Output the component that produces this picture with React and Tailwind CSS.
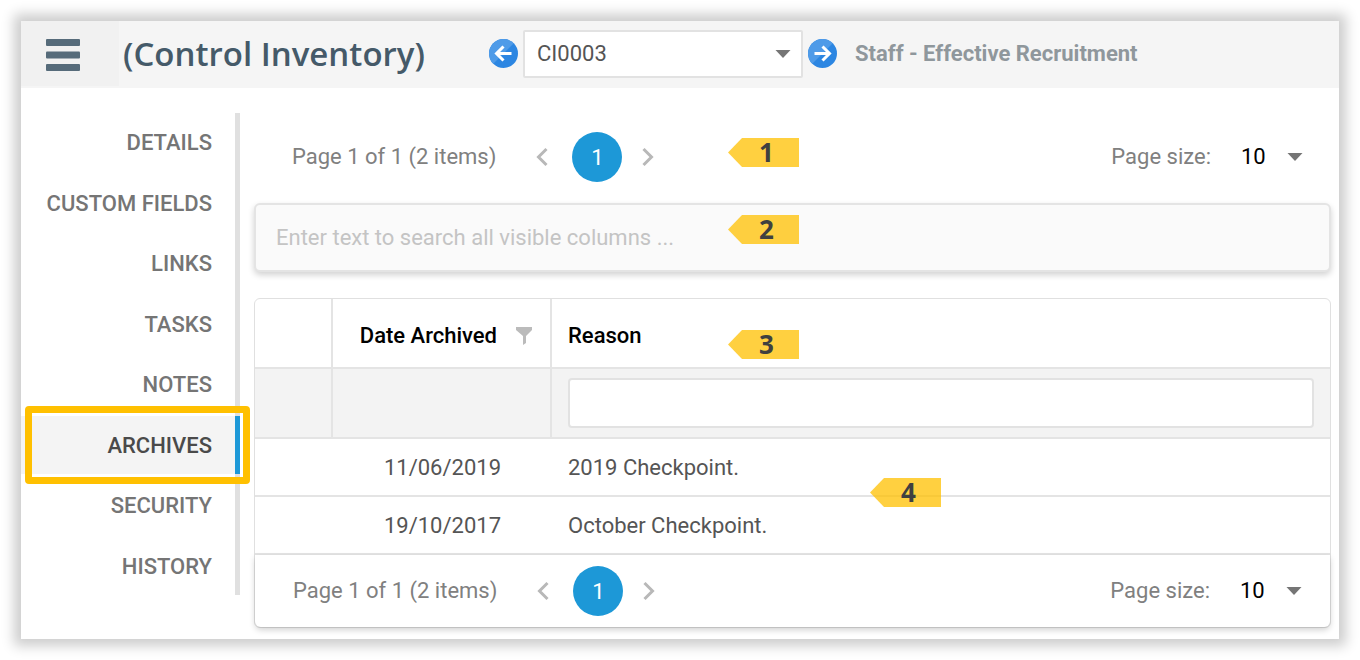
import React, { useState } from "react";

const tabs = [
  "Details",
  "Custom Fields",
  "Links",
  "Tasks",
  "Notes",
  "Archives",
  "Security",
  "History",
];

const archives = [
  { date: "11/06/2019", reason: "2019 Checkpoint." },
  { date: "19/10/2017", reason: "October Checkpoint." },
];

const Caret = () => (
  <svg
    className="pointer-events-none absolute right-3 top-1/2 h-2 w-4 -translate-y-1/2"
    viewBox="0 0 16 8"
    aria-hidden="true"
  >
    <path d="M0.5 0h15L8 8z" fill="#757575" />
  </svg>
);

const Chevron = ({ flip }) => (
  <svg
    className={flip ? "h-5 w-3 rotate-180" : "h-5 w-3"}
    viewBox="0 0 12 20"
    fill="none"
    stroke="#b8b8b8"
    strokeWidth="3"
    aria-hidden="true"
  >
    <path d="M10.5 2L2.5 10l8 8" />
  </svg>
);

const RoundArrow = ({ id, flip }) => (
  <svg className="h-[29px] w-[29px]" viewBox="0 0 29 29" aria-hidden="true">
    <clipPath id={id}>
      <circle cx="14.5" cy="14.5" r="14.5" />
    </clipPath>
    <g clipPath={`url(#${id})`}>
      <path d="M0 0h29v29H0z" fill="#2c86e2" />
      <path d="M0 0h29L0 29z" fill="#4f9be8" />
    </g>
    <g transform={flip ? "rotate(180 14.5 14.5)" : undefined}>
      <path
        d="M22.5 14.5H8M14.5 7.5l-7 7 7 7"
        fill="none"
        stroke="#fff"
        strokeWidth="3"
      />
    </g>
  </svg>
);

const Marker = ({ number, className }) => (
  <div
    className={`absolute flex h-[29px] w-[71px] items-center justify-center bg-[#ffc000]/75 pb-0.5 pl-1.5 font-['Noto_Sans'] text-[26px] font-bold leading-7 text-[#404040] [clip-path:polygon(14px_0,100%_0,100%_100%,14px_100%,0_50%)] ${className}`}
  >
    {number}
  </div>
);

const Pager = ({ id }) => {
  const [size, setSize] = useState("10");

  return (
    <div className="flex h-[72px] items-center justify-between pl-[38px] pr-4 text-[#808080]">
      <div className="flex items-center">
        <span>Page 1 of 1 (2 items)</span>
        <button className="ml-10" aria-label="Previous page">
          <Chevron />
        </button>
        <button className="ml-6 h-[50px] w-[50px] rounded-full bg-[#1d98d7] pt-0.5 text-white">
          1
        </button>
        <button className="ml-5" aria-label="Next page">
          <Chevron flip />
        </button>
      </div>
      <div className="flex items-center">
        <label htmlFor={id}>Page size:</label>
        <div className="relative ml-[30px]">
          <select
            id={id}
            value={size}
            onChange={(e) => setSize(e.target.value)}
            className="w-[74px] appearance-none bg-transparent text-black"
          >
            <option>10</option>
            <option>20</option>
            <option>50</option>
          </select>
          <Caret />
        </div>
      </div>
    </div>
  );
};

const App = () => {
  const [active, setActive] = useState("Archives");

  return (
    <div className="bg-white p-[21px] font-['Roboto',sans-serif] text-[22px] leading-7">
      <div className="bg-white shadow-[0_0_12px_7px_rgba(0,0,0,0.2)]">
        <header className="flex h-[67px] items-center bg-[#f5f5f5] pb-0.5">
          <button
            className="flex h-full w-[98px] shrink-0 items-center bg-[#f1f1f1] pl-[25px] pt-0.5"
            aria-label="Menu"
          >
            <svg className="h-8 w-[34px]" viewBox="0 0 34 32" fill="#566b7a">
              <rect width="34" height="7" rx="1" />
              <rect y="12.5" width="34" height="7" rx="1" />
              <rect y="25" width="34" height="7" rx="1" />
            </svg>
          </button>
          <h1 className="w-[370px] shrink-0 pl-1 font-['Open_Sans'] text-[33px] font-semibold leading-10 text-[#455a69]">
            (Control Inventory)
          </h1>
          <button aria-label="Previous control">
            <RoundArrow id="prev-disc" />
          </button>
          <div className="relative mx-[5px]">
            <select
              aria-label="Control"
              className="h-12 w-[280px] appearance-none rounded-xs border-2 border-[#e2e2e2] bg-white pl-3 text-[#555]"
            >
              <option>CI0003</option>
            </select>
            <Caret />
          </div>
          <button aria-label="Next control">
            <RoundArrow id="next-disc" flip />
          </button>
          <span className="ml-[18px] font-bold text-[#8f979c]">
            Staff - Effective Recruitment
          </span>
        </header>

        <div className="flex pb-[11px] pr-2 pt-[25px]">
          <nav className="w-[219px] shrink-0">
            <ul className="flex h-[482px] flex-col justify-between border-r-[5px] border-[#e0e0e0] text-right font-medium uppercase text-[#757575]">
              {tabs.map((tab) => (
                <li
                  key={tab}
                  className={
                    tab === active
                      ? "relative -mr-[5px] border-r-[5px] border-[#1d98d7] bg-[#f4f4f4] text-[#4a4a4a]"
                      : ""
                  }
                >
                  <a
                    href={`#${tab}`}
                    onClick={() => setActive(tab)}
                    className="block pb-3.5 pr-[23px] pt-4"
                  >
                    {tab}
                  </a>
                  {tab === active && (
                    <div className="pointer-events-none absolute -bottom-2.5 -right-[15px] -top-2.5 left-1 rounded-sm border-[7px] border-[#ffc000]" />
                  )}
                </li>
              ))}
            </ul>
          </nav>

          <main className="relative ml-3.5 grow">
            <div className="pb-2.5 pt-2">
              <Pager id="page-size-top" />
            </div>

            <input
              type="search"
              aria-label="Search"
              placeholder="Enter text to search all visible columns ..."
              className="block h-[69px] w-full rounded-md border-2 border-[#e4e4e4] bg-[#fafafa] px-5 shadow-[0_3px_6px_rgba(0,0,0,0.18)] placeholder:text-[#c4c4c4]"
            />

            <div className="mt-[26px] rounded-md border border-[#e0e0e0]">
              <table className="w-full table-fixed border-collapse">
                <colgroup>
                  <col className="w-[77px]" />
                  <col className="w-[219px]" />
                  <col />
                </colgroup>
                <thead>
                  <tr className="h-[69px] border-b-2 border-[#e4e4e4] font-medium text-black">
                    <th className="border-r-2 border-[#e4e4e4]" />
                    <th className="border-r-2 border-[#e4e4e4] font-medium">
                      <div className="flex items-center justify-end gap-[19px] pr-[18px] pt-1.5">
                        Date Archived
                        <svg className="h-[18px] w-4" viewBox="0 0 16 18">
                          <path d="M0 0h16v3l-6 6v7l-3 2V9L0 3z" fill="#bbb" />
                        </svg>
                      </div>
                    </th>
                    <th className="pl-4 pt-1.5 text-left font-medium">
                      Reason
                    </th>
                  </tr>
                  <tr className="h-[70px] border-b-2 border-[#e4e4e4] bg-[#f3f3f3]">
                    <td className="border-r-2 border-[#e4e4e4]" />
                    <td className="border-r-2 border-[#e4e4e4]" />
                    <td className="px-4">
                      <input
                        aria-label="Filter reason"
                        className="block h-[50px] w-full rounded-sm border-2 border-[#e2e2e2] bg-white px-3"
                      />
                    </td>
                  </tr>
                </thead>
                <tbody className="text-[#555]">
                  {archives.map((row) => (
                    <tr
                      key={row.date}
                      className="h-[58px] border-b-2 border-[#e4e4e4]"
                    >
                      <td />
                      <td className="pr-[50px] pt-0.5 text-right">
                        {row.date}
                      </td>
                      <td className="pl-[17px] pt-0.5">{row.reason}</td>
                    </tr>
                  ))}
                </tbody>
              </table>
              <div className="rounded-b-md shadow-[0_3px_6px_rgba(0,0,0,0.18)]">
                <Pager id="page-size-bottom" />
              </div>
            </div>

            <Marker number={1} className="left-[474px] top-[25px]" />
            <Marker number={2} className="left-[474px] top-[102px]" />
            <Marker number={3} className="left-[474px] top-[217px]" />
            <Marker number={4} className="left-[616px] top-[365px]" />
          </main>
        </div>
      </div>
    </div>
  );
};

export default App;
